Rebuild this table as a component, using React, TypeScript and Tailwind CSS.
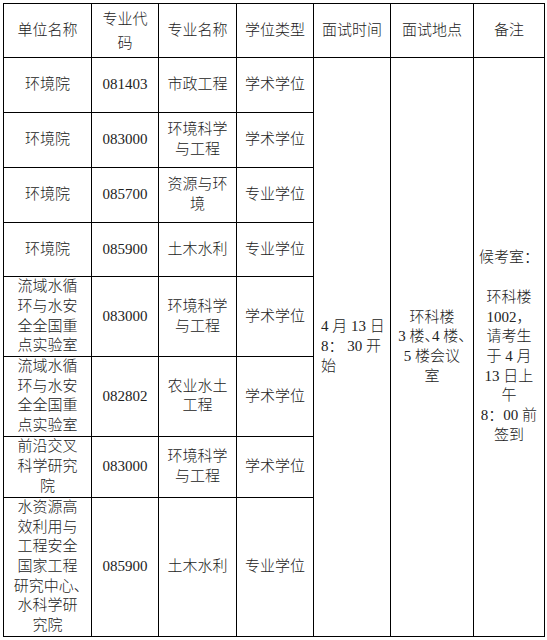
import React from "react";

type Row = {
  unit: string[];
  code: string;
  major: string[];
  type: string;
  h: string;
};

const rows: Row[] = [
  { unit: ["环境院"], code: "081403", major: ["市政工程"], type: "学术学位", h: "h-[55px]" },
  { unit: ["环境院"], code: "083000", major: ["环境科学", "与工程"], type: "学术学位", h: "h-[55px]" },
  { unit: ["环境院"], code: "085700", major: ["资源与环", "境"], type: "专业学位", h: "h-[55px]" },
  { unit: ["环境院"], code: "085900", major: ["土木水利"], type: "专业学位", h: "h-[54px]" },
  {
    unit: ["流域水循", "环与水安", "全全国重", "点实验室"],
    code: "083000",
    major: ["环境科学", "与工程"],
    type: "学术学位",
    h: "h-[80px]",
  },
  {
    unit: ["流域水循", "环与水安", "全全国重", "点实验室"],
    code: "082802",
    major: ["农业水土", "工程"],
    type: "学术学位",
    h: "h-[79px]",
  },
  {
    unit: ["前沿交叉", "科学研究", "院"],
    code: "083000",
    major: ["环境科学", "与工程"],
    type: "学术学位",
    h: "h-[61px]",
  },
  {
    unit: ["水资源高", "效利用与", "工程安全", "国家工程", "研究中心、", "水科学研", "究院"],
    code: "085900",
    major: ["土木水利"],
    type: "专业学位",
    h: "h-[139px]",
  },
];

function Lines({ lines }: { lines: string[] }) {
  return (
    <>
      {lines.map((l, i) => (
        <div
          key={i}
          className={
            "whitespace-pre " + (l.endsWith("、") ? "[font-feature-settings:'halt']" : "")
          }
        >
          {l === "" ? "\u00a0" : l}
        </div>
      ))}
    </>
  );
}

const cell = "border border-black text-center align-middle p-0";

export default function App() {
  return (
    <div className="bg-white w-[547px] h-[640px] pt-[3px] pl-[3px] font-['Liberation_Serif','Noto_Sans_CJK_SC',serif] font-light text-[15px] leading-[19.7px] text-[#222]">
      <table className="border-collapse table-fixed w-[541px]">
        <colgroup>
          <col className="w-[88px]" />
          <col className="w-[67px]" />
          <col className="w-[78px]" />
          <col className="w-[77px]" />
          <col className="w-[77px]" />
          <col className="w-[83px]" />
          <col className="w-[71px]" />
        </colgroup>
        <thead>
          <tr className="h-[54px]">
            <th className={cell + " font-light"}>单位名称</th>
            <th className={cell + " font-light leading-[24px]"}>
              <div>专业代</div>
              <div>码</div>
            </th>
            <th className={cell + " font-light"}>专业名称</th>
            <th className={cell + " font-light"}>学位类型</th>
            <th className={cell + " font-light"}>面试时间</th>
            <th className={cell + " font-light"}>面试地点</th>
            <th className={cell + " font-light"}>备注</th>
          </tr>
        </thead>
        <tbody>
          {rows.map((r, i) => (
            <tr key={i} className={r.h}>
              <td className={cell}>
                <Lines lines={r.unit} />
              </td>
              <td className={cell}>{r.code}</td>
              <td className={cell}>
                <Lines lines={r.major} />
              </td>
              <td className={cell}>{r.type}</td>
              {i === 0 && (
                <>
                  <td rowSpan={8} className={cell + " text-left pl-[7px]"}>
                    <Lines lines={["4 月 13 日", "8： 30 开", "始"]} />
                  </td>
                  <td rowSpan={8} className={cell}>
                    <Lines lines={["环科楼", "3 楼、4 楼、", "5 楼会议", "室"]} />
                  </td>
                  <td rowSpan={8} className={cell}>
                    <Lines
                      lines={[
                        "候考室：",
                        "",
                        "环科楼",
                        "1002，",
                        "请考生",
                        "于 4 月",
                        "13 日上",
                        "午",
                        "8：00 前",
                        "签到",
                      ]}
                    />
                  </td>
                </>
              )}
            </tr>
          ))}
        </tbody>
      </table>
    </div>
  );
}
